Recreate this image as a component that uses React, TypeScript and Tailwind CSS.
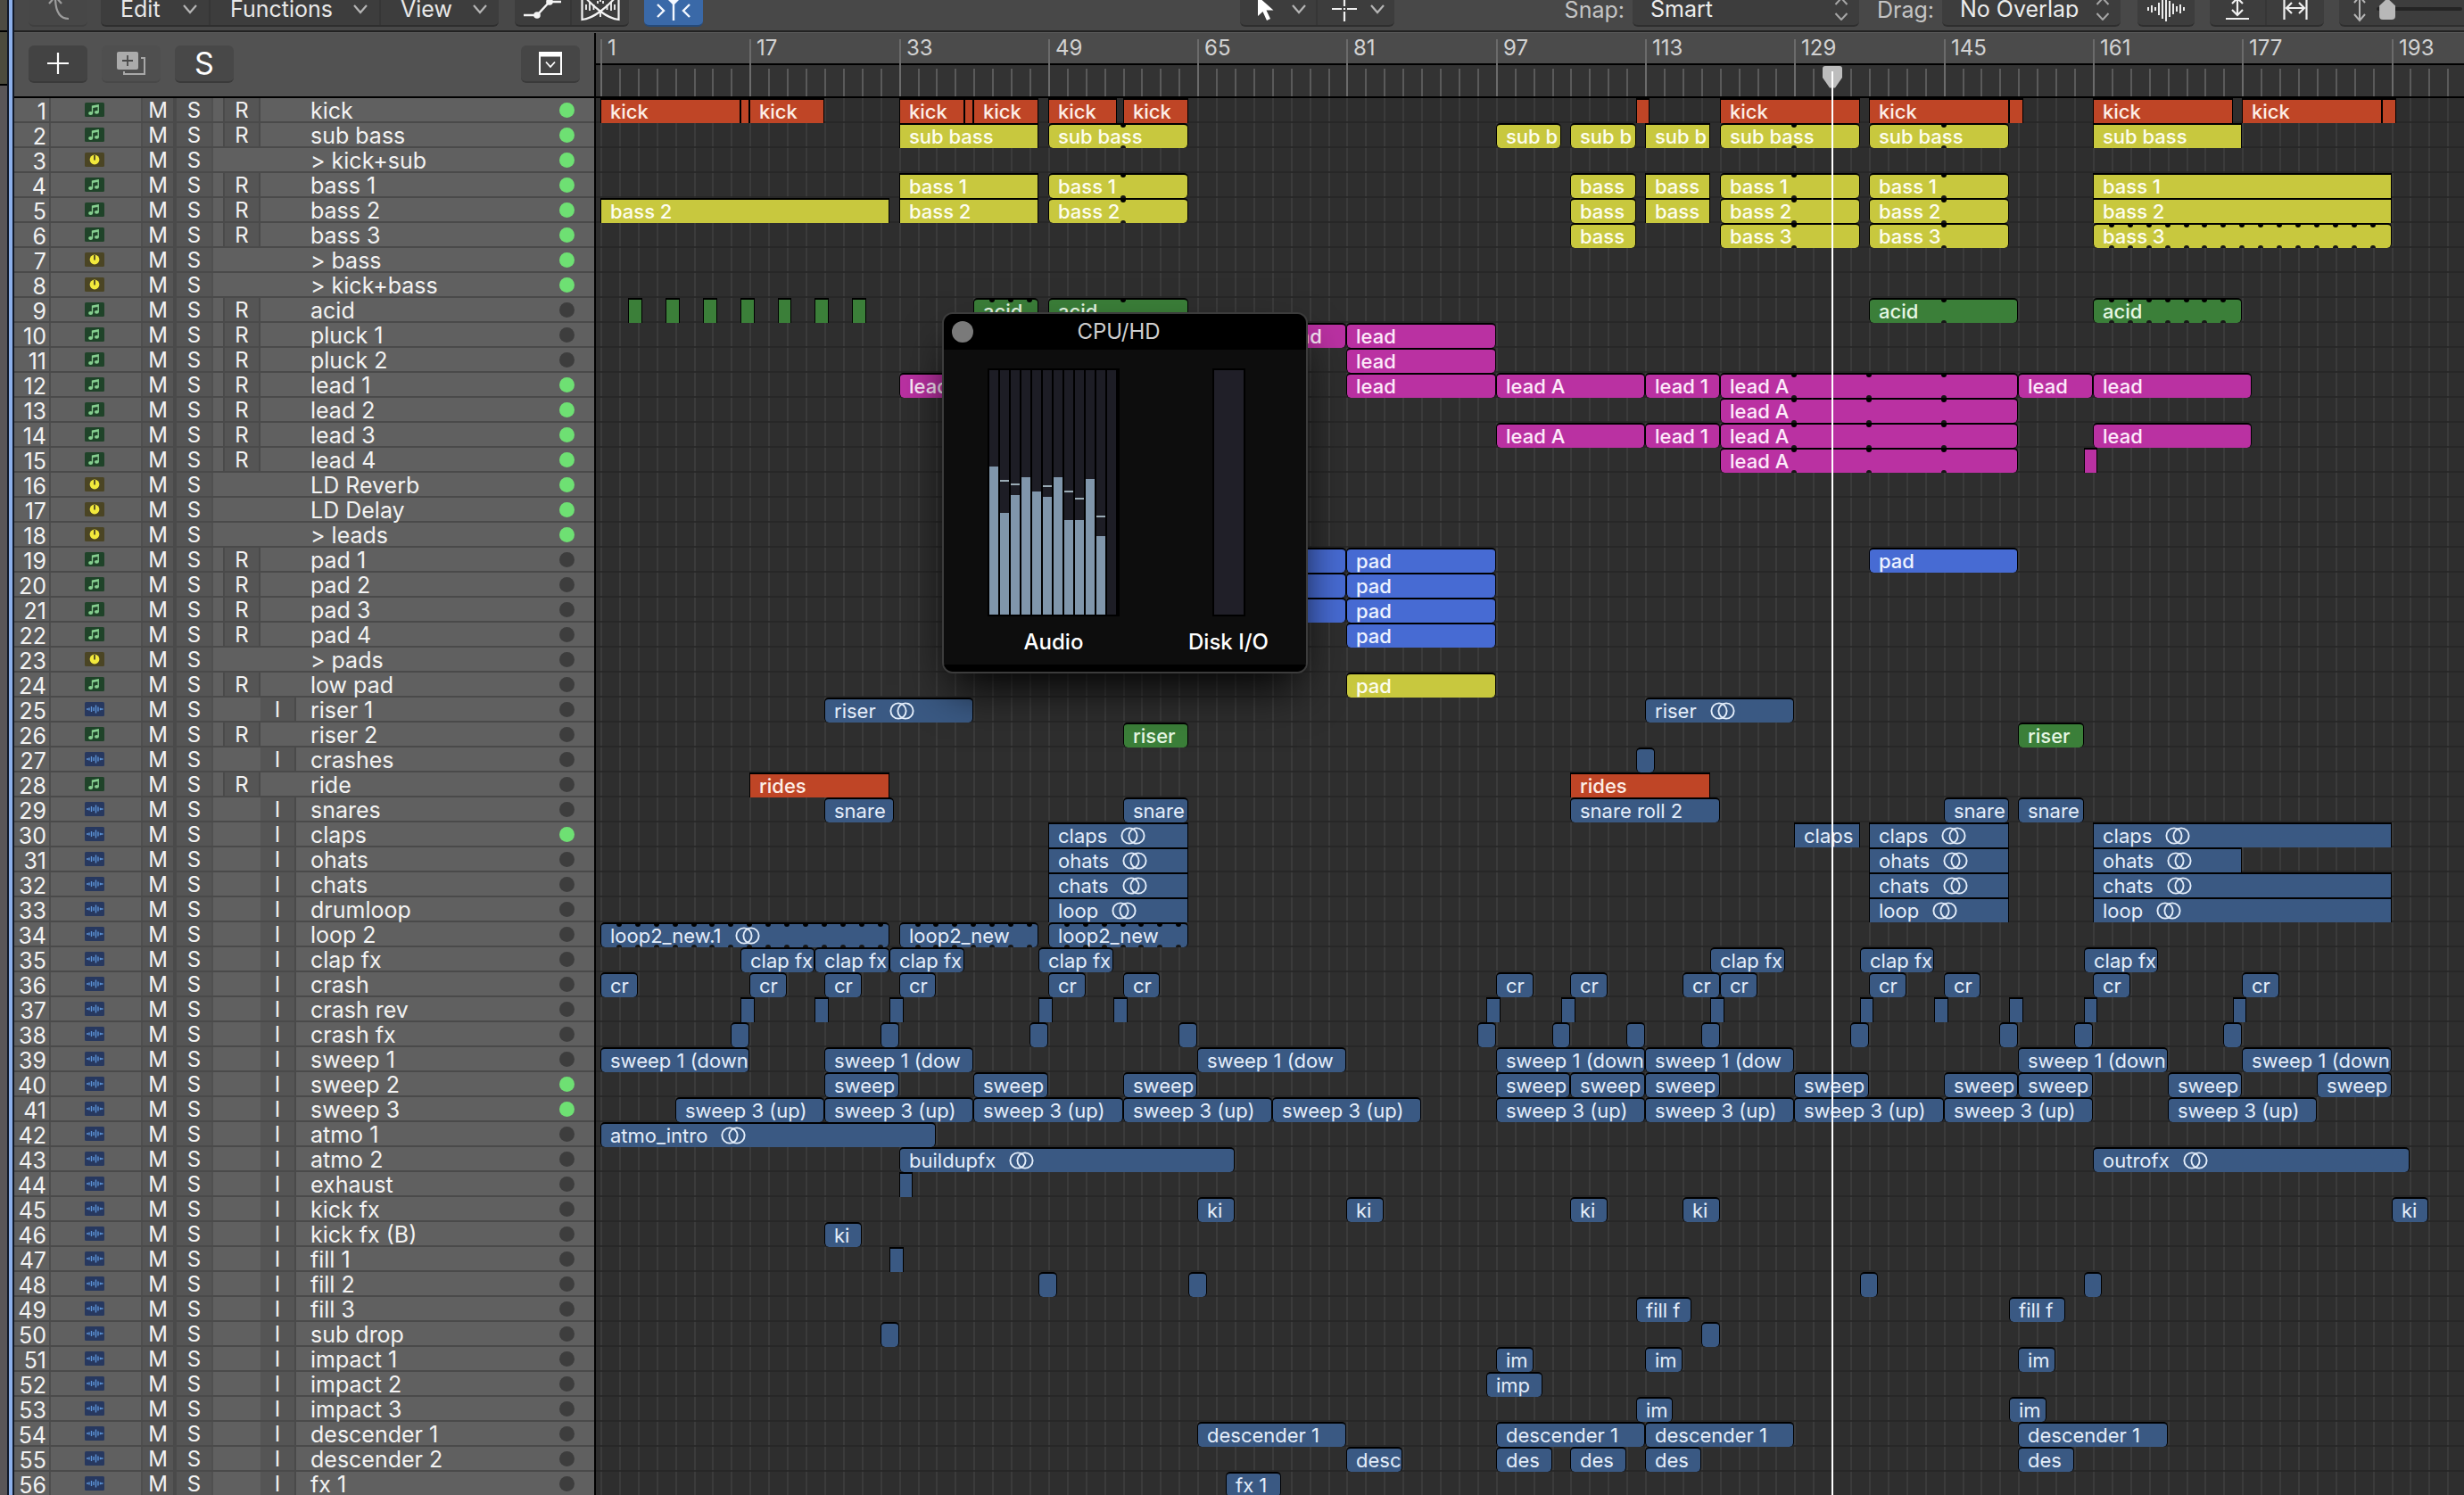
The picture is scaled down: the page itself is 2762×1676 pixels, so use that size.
import React from "react";

type Kind = "midi" | "aux" | "audio";
type Color = "orange" | "yellow" | "green" | "magenta" | "blue" | "navy";
type Region = {
  start: number;
  end: number;
  name: string;
  color: Color;
  stereo?: boolean;
  square?: boolean;
  loop?: number;
};
type Track = { name: string; kind: Kind; on: boolean; regions: Region[] };

const BAR = 10.456;
const ORIGIN = 5;
const barX = (bar: number) => Math.round(ORIGIN + (bar - 1) * BAR);

/* Region tuple: start bar, end bar, name, flags (o = stereo, q = square corners), loop length in bars */
type Spec = [number, number, string?, string?, number?];

const make = (color: Color, specs: Spec[]): Region[] =>
  specs.map(([start, end, name = "", flags = "", loop]) => ({
    start,
    end,
    name,
    color,
    stereo: flags.includes("o"),
    square: flags.includes("q"),
    loop,
  }));

const each = (color: Color, name: string, length: number, starts: number[], flags = ""): Region[] =>
  make(color, starts.map((s): Spec => [s, s + length, name, flags]));

const t = (name: string, kind: Kind, on: boolean, ...groups: Region[][]): Track => ({
  name,
  kind,
  on,
  regions: groups.flat(),
});

const tracks: Track[] = [
  t("kick", "midi", true, make("orange", [
    [1, 16, "kick", "q"], [16, 17, "", "q"], [17, 25, "kick", "q"], [33, 40, "kick", "q"], [40, 41, "", "q"],
    [41, 48, "kick", "q"], [49, 56.4, "kick", "q"], [57, 64, "kick", "q"], [112, 113.5, "", "q"],
    [121, 136, "kick", "q"], [137, 152, "kick", "q"], [152, 153.5, "", "q"], [161, 176, "kick", "q"],
    [177, 192, "kick", "q"], [192, 193.5, "", "q"],
  ])),
  t("sub bass", "midi", true, make("yellow", [
    [33, 48, "sub bass", "q"], [49, 64, "sub bass", "", 8], [97, 104, "sub b"], [105, 112, "sub b"],
    [113, 120, "sub b", "q"], [121, 136, "sub bass", "", 8], [137, 152, "sub bass", "", 8], [161, 177, "sub bass", "q"],
  ])),
  t("> kick+sub", "aux", true),
  t("bass 1", "midi", true, make("yellow", [
    [33, 48, "bass 1", "q"], [49, 64, "bass 1", "", 8], [105, 112, "bass"], [113, 120, "bass", "q"],
    [121, 136, "bass 1", "", 8], [137, 152, "bass 1", "", 8], [161, 193, "bass 1", "q"],
  ])),
  t("bass 2", "midi", true, make("yellow", [
    [1, 32, "bass 2", "q"], [33, 48, "bass 2", "q"], [49, 64, "bass 2", "", 8], [105, 112, "bass"],
    [113, 120, "bass", "q"], [121, 136, "bass 2", "", 8], [137, 152, "bass 2", "", 8], [161, 193, "bass 2", "q"],
  ])),
  t("bass 3", "midi", true, make("yellow", [
    [105, 112, "bass"], [121, 136, "bass 3", "", 8], [137, 152, "bass 3", "", 8], [161, 193, "bass 3", "", 2],
  ])),
  t("> bass", "aux", true),
  t("> kick+bass", "aux", true),
  t("acid", "midi", false, each("green", "", 1.5, [4, 8, 12, 16, 20, 24, 28], "q"), make("green", [
    [41, 48, "acid", "", 2], [49, 64, "acid", "", 8], [137, 153, "acid", "", 8], [161, 177, "acid", "", 2],
  ])),
  t("pluck 1", "midi", false, make("magenta", [[73, 81, "lead"], [81, 97, "lead"]])),
  t("pluck 2", "midi", false, make("magenta", [[81, 97, "lead"]])),
  t("lead 1", "midi", true, make("magenta", [
    [33, 49, "lead"], [81, 97, "lead"], [97, 113, "lead A"], [113, 121, "lead 1"], [121, 153, "lead A", "", 8],
    [153, 161, "lead"], [161, 178, "lead"],
  ])),
  t("lead 2", "midi", true, make("magenta", [[121, 153, "lead A", "", 8]])),
  t("lead 3", "midi", true, make("magenta", [
    [97, 113, "lead A"], [113, 121, "lead 1"], [121, 153, "lead A", "", 8], [161, 178, "lead"],
  ])),
  t("lead 4", "midi", true, make("magenta", [[121, 153, "lead A", "", 8], [160, 161.5, "", "q"]])),
  t("LD Reverb", "aux", true),
  t("LD Delay", "aux", true),
  t("> leads", "aux", true),
  t("pad 1", "midi", false, make("blue", [[65, 81, ""], [81, 97, "pad"], [137, 153, "pad"]])),
  t("pad 2", "midi", false, make("blue", [[65, 81, ""], [81, 97, "pad"]])),
  t("pad 3", "midi", false, make("blue", [[65, 81, ""], [81, 97, "pad"]])),
  t("pad 4", "midi", false, make("blue", [[81, 97, "pad"]])),
  t("> pads", "aux", false),
  t("low pad", "midi", false, make("yellow", [[81, 97, "pad"]])),
  t("riser 1", "audio", false, each("navy", "riser", 16, [25, 113], "o")),
  t("riser 2", "midi", false, each("green", "riser", 7, [57, 153])),
  t("crashes", "audio", false, each("navy", "", 2, [112])),
  t("ride", "midi", false, each("orange", "rides", 15, [17, 105], "q")),
  t("snares", "audio", false, make("navy", [
    [25, 32.5, "snare"], [57, 64, "snare"], [105, 121, "snare roll 2"], [145, 152, "snare"], [153, 160, "snare"],
  ])),
  t("claps", "audio", true, make("navy", [
    [49, 64, "claps", "oq"], [129, 136, "claps", "q"], [137, 152, "claps", "oq"], [161, 193, "claps", "oq"],
  ])),
  t("ohats", "audio", false, make("navy", [
    [49, 64, "ohats", "oq"], [137, 152, "ohats", "oq"], [161, 177, "ohats", "oq"],
  ])),
  t("chats", "audio", false, make("navy", [
    [49, 64, "chats", "oq"], [137, 152, "chats", "oq"], [161, 193, "chats", "oq"],
  ])),
  t("drumloop", "audio", false, make("navy", [
    [49, 64, "loop", "oq"], [137, 152, "loop", "oq"], [161, 193, "loop", "oq"],
  ])),
  t("loop 2", "audio", false, make("navy", [
    [1, 32, "loop2_new.1", "o", 2], [33, 48, "loop2_new", "", 2], [49, 64, "loop2_new", "", 2],
  ])),
  t("clap fx", "audio", false, each("navy", "clap fx", 8, [16, 24, 32, 48, 120, 136, 160])),
  t("crash", "audio", false, each("navy", "cr", 4, [1, 17, 25, 33, 49, 57, 97, 105, 117, 121, 137, 145, 161, 177])),
  t("crash rev", "audio", false, each("navy", "", 1.5, [16, 24, 32, 48, 56, 96, 104, 120, 136, 144, 152, 160, 176], "q")),
  t("crash fx", "audio", false, each("navy", "", 2, [15, 31, 47, 63, 95, 103, 111, 119, 135, 151, 159, 175])),
  t("sweep 1", "audio", false, make("navy", [
    [1, 17, "sweep 1 (down"], [25, 41, "sweep 1 (dow"], [65, 81, "sweep 1 (dow"], [97, 113, "sweep 1 (down"],
    [113, 129, "sweep 1 (dow"], [153, 169, "sweep 1 (down"], [177, 193, "sweep 1 (down"],
  ])),
  t("sweep 2", "audio", true, each("navy", "sweep", 8, [25, 41, 57, 97, 105, 113, 129, 145, 153, 169, 185])),
  t("sweep 3", "audio", true, each("navy", "sweep 3 (up)", 16, [9, 25, 41, 57, 73, 97, 113, 129, 145, 169])),
  t("atmo 1", "audio", false, each("navy", "atmo_intro", 36, [1], "o")),
  t("atmo 2", "audio", false, make("navy", [[33, 69, "buildupfx", "o"], [161, 195, "outrofx", "o"]])),
  t("exhaust", "audio", false, each("navy", "", 1.5, [33], "q")),
  t("kick fx", "audio", false, each("navy", "ki", 4, [65, 81, 105, 117, 193])),
  t("kick fx (B)", "audio", false, each("navy", "ki", 4, [25])),
  t("fill 1", "audio", false, each("navy", "", 1.5, [32], "q")),
  t("fill 2", "audio", false, each("navy", "", 2, [48, 64, 136, 160])),
  t("fill 3", "audio", false, each("navy", "fill f", 6, [112, 152])),
  t("sub drop", "audio", false, each("navy", "", 2, [31, 119])),
  t("impact 1", "audio", false, each("navy", "im", 4, [97, 113, 153])),
  t("impact 2", "audio", false, each("navy", "imp", 6, [96])),
  t("impact 3", "audio", false, each("navy", "im", 4, [112, 152])),
  t("descender 1", "audio", false, each("navy", "descender 1", 16, [65, 97, 113, 153])),
  t("descender 2", "audio", false, each("navy", "desc", 6, [81]), each("navy", "des", 6, [97, 105, 113, 153])),
  t("fx 1", "audio", false, each("navy", "fx 1", 6, [68])),
];

const fill: Record<Color, string> = {
  orange: "bg-[#bf4526] text-[#fdeee6] font-medium",
  yellow: "bg-[#c8c83e] text-[#fdfdee] font-medium",
  green: "bg-[#3b7f39] text-[#e6f7e4] font-medium",
  magenta: "bg-[#ba31a2] text-[#fdeafa] font-medium",
  blue: "bg-[#476bd3] text-[#eef3ff] font-medium",
  navy: "bg-[#3a5983] text-[#e3edfa]",
};

function StereoIcon() {
  return (
    <svg viewBox="0 0 28 20" className="ml-[15px] h-5 w-7 shrink-0" fill="none" stroke="currentColor" strokeWidth="1.9">
      <circle cx="10" cy="10" r="8.6" />
      <circle cx="18" cy="10" r="8.6" />
    </svg>
  );
}

function RegionBox({ region }: { region: Region }) {
  const left = barX(region.start);
  const width = barX(region.end) - left;
  const notches: number[] = [];
  if (region.loop) {
    for (let b = region.start + region.loop; b < region.end; b += region.loop) notches.push(barX(b) - left);
  }
  return (
    <div
      className={`absolute top-0 flex h-7 items-center border-x border-t-2 border-black ${region.square ? "" : "rounded-[5px]"} ${fill[region.color]}`}
      style={{ left, width }}
    >
      {region.name && (
        <span className="flex items-center pl-[10px] text-[22px] leading-[26px] whitespace-nowrap">
          {region.name}
          {region.stereo && <StereoIcon />}
        </span>
      )}
      {notches.map((n) => (
        <React.Fragment key={n}>
          <span className="absolute top-0 h-[3px] w-[6px] rounded-b-full bg-black" style={{ left: n - 4 }} />
          <span className="absolute bottom-0 h-[3px] w-[6px] rounded-t-full bg-[#161616]" style={{ left: n - 4 }} />
        </React.Fragment>
      ))}
    </div>
  );
}

function KindIcon({ kind }: { kind: Kind }) {
  if (kind === "midi")
    return (
      <svg viewBox="0 0 22 16" className="h-4 w-[22px]">
        <rect width="22" height="16" rx="1.5" fill="#1f4329" />
        <g fill="#86cf90">
          <ellipse cx="6.6" cy="12" rx="2.5" ry="1.9" />
          <ellipse cx="13.4" cy="10.8" rx="2.5" ry="1.9" />
          <path d="M7.8 12V3.4L15.9 2v8.8h-1.4V5L9.2 5.9V12z" />
        </g>
      </svg>
    );
  if (kind === "aux")
    return (
      <svg viewBox="0 0 22 16" className="h-4 w-[22px]">
        <rect width="22" height="16" rx="1.5" fill="#4b4524" />
        <circle cx="11" cy="8" r="5.4" fill="#f2e93c" />
        <path d="M11 3v5.4" stroke="#4b4524" strokeWidth="1.8" />
      </svg>
    );
  return (
    <svg viewBox="0 0 22 16" className="h-4 w-[22px]">
      <rect width="22" height="16" rx="1.5" fill="#27385f" />
      <path d="M2 8h2M5 6.5v3M7.5 5v6M10 6v4M12.5 3.5v9M15 5.5v5M17.5 6.7v2.6M18 8h2.5" stroke="#5c93d6" strokeWidth="1.4" />
    </svg>
  );
}

const cell = "flex h-[26px] cursor-default items-center justify-center bg-[#555] pt-[2px] text-2xl leading-6 text-[#f2f2f2]";

function TrackHeader({ track, index }: { track: Track; index: number }) {
  return (
    <li className="grid h-7 grid-cols-[41px_101px_40px_41px_11px_42px_40px_1fr_39px] items-center border-b-2 border-[#4a4a4a] bg-[#606060]">
      <span className="flex h-[26px] items-start justify-end border-r-2 border-[#4e4e4e] pt-[2px] pr-[3px] text-[25px] leading-[27px] text-[#f2f2f2]">
        {index + 1}
      </span>
      <span className="flex justify-center pr-1">
        <KindIcon kind={track.kind} />
      </span>
      <button className={`${cell} border-r-4 border-l-2 border-r-[#4a4a4a] border-l-[#4e4e4e]`} aria-label={`Mute ${track.name}`}>M</button>
      <button className={`${cell} border-r-2 border-[#505050]`} aria-label={`Solo ${track.name}`}>S</button>
      <span />
      {track.kind === "midi" ? (
        <button className={`${cell} border-x-2 border-[#4a4a4a]`} aria-label={`Record ${track.name}`}>R</button>
      ) : (
        <span />
      )}
      {track.kind === "audio" ? (
        <button className={`${cell} border-r-2 border-[#4a4a4a]`} aria-label={`Input monitor ${track.name}`}>I</button>
      ) : (
        <span />
      )}
      <span className="pt-[2px] pl-4 text-[25px] leading-6 whitespace-nowrap text-[#f2f2f2]">{track.name}</span>
      <span className={`size-[17px] rounded-full ${track.on ? "bg-[#6ee073]" : "bg-[#3d3d3d]"}`} />
    </li>
  );
}

const Chevron = () => (
  <svg viewBox="0 0 18 12" className="h-3 w-[18px]" fill="none" stroke="#b4b4b4" strokeWidth="2.2">
    <path d="M2 2l7 8 7-8" />
  </svg>
);

const UpDown = () => (
  <svg viewBox="0 0 16 26" className="pointer-events-none h-[26px] w-4" fill="none" stroke="#a6a6a6" strokeWidth="2">
    <path d="M1.5 8L8 1l6.5 7M1.5 18L8 25l6.5-7" />
  </svg>
);

const group = "flex h-[38px] rounded-b-md border-b-2 border-[#2e2e2e] bg-[#3d3d3d]";

function MenuButton({ label, width, last }: { label: string; width: string; last?: boolean }) {
  return (
    <button className={`flex items-center justify-between pr-3 pl-[22px] text-[25px] leading-5 text-[#e8e8e8] ${width} ${last ? "" : "border-r-2 border-[#363636]"}`}>
      {label}
      <Chevron />
    </button>
  );
}

function Picker({ label, value, width }: { label: string; value: string; width: string }) {
  return (
    <label className="flex h-[38px] items-center gap-[9px] text-[25px] leading-5 text-[#c4c4c4]">
      {label}
      <span className={`${group} relative items-center ${width}`}>
        <select className="w-full appearance-none bg-transparent pl-[20px] text-[25px] leading-5 text-[#ececec] outline-none">
          <option>{value}</option>
        </select>
        <span className="pointer-events-none absolute right-3">
          <UpDown />
        </span>
      </span>
    </label>
  );
}

function Toolbar() {
  return (
    <header className="flex h-9 shrink-0 items-end overflow-hidden border-b-2 border-[#222] bg-[#484848] pb-1 pl-4">
      <button aria-label="Back" className="flex h-[38px] w-[66px] items-center justify-center rounded-b-md border-b-2 border-[#3f3f3f] bg-[#474747]">
        <svg viewBox="0 0 26 30" className="h-[30px] w-[26px]" fill="none" stroke="#9d9d9d" strokeWidth="2.2">
          <path d="M25 26C15 26 10 19 10 2M3 9l7-8 7 8" />
        </svg>
      </button>
      <div className={`${group} ml-[15px]`}>
        <MenuButton label="Edit" width="w-[123px]" />
        <MenuButton label="Functions" width="w-[191px]" />
        <MenuButton label="View" width="w-[132px]" last />
      </div>
      <div className={`${group} ml-[18px]`}>
        <button aria-label="Automation" className="flex w-16 items-center justify-center border-r-2 border-[#363636]">
          <svg viewBox="0 0 44 34" className="h-[34px] w-11" fill="none" stroke="#f4f4f4" strokeWidth="2.4">
            <path d="M1 24h15L30 9h13" />
            <circle cx="16" cy="24" r="3.8" fill="#f4f4f4" stroke="none" />
            <circle cx="30" cy="9" r="3.8" fill="#f4f4f4" stroke="none" />
          </svg>
        </button>
        <button aria-label="Flex" className="flex w-16 items-center justify-center">
          <svg viewBox="0 0 44 36" className="h-9 w-11" fill="none" stroke="#f4f4f4" strokeWidth="2.2">
            <path d="M1.5 1v29C14 29 30 16 42.500 1v29C30 29 14 16 1.500 1" />
            <path d="M6 13v6M10 10v10M14.500 13v6M19 9v3M22 6v4M25 9v3M29.500 13v6M34 10v10M38 13v6M22 21v6" strokeWidth="1.8" />
          </svg>
        </button>
      </div>
      <button aria-label="Catch playhead" className="ml-[17px] flex h-[38px] w-[66px] items-center justify-center rounded-b-md border-b-2 border-[#254a7a] bg-[#3a69a8]">
        <svg viewBox="0 0 40 34" className="h-[34px] w-10" fill="none" stroke="#f4f8ff" strokeWidth="2.4">
          <path d="M2 12l7 7-7 7M38 12l-7 7 7 7M20 8v22" />
          <path d="M13 2h14v4l-7 7-7-7z" fill="#f4f8ff" stroke="none" />
        </svg>
      </button>
      <div className="grow-[76]" />
      <div className={group}>
        <button aria-label="Pointer tool" className="flex w-[87px] items-center justify-between border-r-2 border-[#363636] pr-[10px] pl-[19px]">
          <svg viewBox="0 0 20 28" className="h-7 w-5" fill="#fff">
            <path d="M1 0v22l5.500-5 4.500 10 4-2-4.500-9.500h8z" />
          </svg>
          <Chevron />
        </button>
        <button aria-label="Marquee tool" className="flex w-[86px] items-center justify-between pr-[10px] pl-[16px]">
          <svg viewBox="0 0 28 28" className="size-7" stroke="#f0f0f0" strokeWidth="2.2">
            <path d="M0 14h11M17 14h11M14 0v11M14 17v11M14 13v2" />
          </svg>
          <Chevron />
        </button>
      </div>
      <div className="grow-[24]" />
      <Picker label="Snap:" value="Smart" width="w-[254px]" />
      <div className="w-5 shrink-0" />
      <Picker label="Drag:" value="No Overlap" width="w-[200px]" />
      <button aria-label="Waveform zoom" className={`${group} ml-[19px] w-16 items-center justify-center`}>
        <svg viewBox="0 0 42 30" className="h-[30px] w-[42px]" stroke="#ececec" strokeWidth="2">
          <path d="M1 13v4M5 11v8M9 13v4M13 8v14M17 4v22M21 1v28M25 6v18M29 9v12M33 12v6M37 10v10M41 13v4" />
        </svg>
      </button>
      <div className={`${group} ml-[17px]`}>
        <button aria-label="Vertical auto zoom" className="flex w-16 items-center justify-center border-r-2 border-[#363636]">
          <svg viewBox="0 0 26 32" className="h-8 w-[26px]" fill="none" stroke="#f0f0f0" strokeWidth="2.2">
            <path d="M0 27h26M13 5v17M7 10l6-6 6 6M7 17l6 6 6-6" />
          </svg>
        </button>
        <button aria-label="Horizontal auto zoom" className="flex w-16 items-center justify-center">
          <svg viewBox="0 0 28 28" className="size-7" fill="none" stroke="#f0f0f0" strokeWidth="2.2">
            <path d="M1.500 0v26M26.500 0v26M5 13h18M10 7l-6 6 6 6M18 7l6 6-6 6" />
          </svg>
        </button>
      </div>
      <label className="ml-[17px] flex h-[38px] w-[140px] items-center gap-3 rounded-bl-md border-b-2 border-[#2e2e2e] bg-[#3d3d3d] pl-[16px]">
        <svg viewBox="0 0 14 30" className="h-[30px] w-[14px] shrink-0" fill="none" stroke="#b4b4b4" strokeWidth="2">
          <path d="M7 2v25M1 8l6-7 6 7M1 21l6 7 6-7" />
        </svg>
        <input
          type="range"
          aria-label="Vertical zoom"
          defaultValue={4}
          className="h-1 w-[96px] shrink-0 appearance-none rounded bg-[#242424] [&::-webkit-slider-thumb]:h-[24px] [&::-webkit-slider-thumb]:w-[18px] [&::-webkit-slider-thumb]:appearance-none [&::-webkit-slider-thumb]:rounded-sm [&::-webkit-slider-thumb]:bg-[#b8b8b8] [&::-webkit-slider-thumb]:[clip-path:polygon(50%_0,100%_35%,100%_100%,0_100%,0_35%)]"
        />
      </label>
    </header>
  );
}

const headBtn = "flex h-[42px] w-[66px] items-center justify-center rounded-md border-b-2 border-[#3a3a3a]";

function TrackHeaderTools() {
  return (
    <div className="flex h-[73px] shrink-0 items-start border-b-2 border-black bg-[#525252] px-4 pt-[14px]">
      <button aria-label="Add track" className={`${headBtn} bg-[#434343]`}>
        <svg viewBox="0 0 24 26" className="h-[26px] w-6" stroke="#fff" strokeWidth="2.2">
          <path d="M12 1v24M0 13h24" />
        </svg>
      </button>
      <button aria-label="Duplicate track" className="ml-4 flex h-[42px] w-[66px] items-center justify-center rounded-md border-b-2 border-[#484848] bg-[#4f4f4f]">
        <svg viewBox="0 0 34 28" className="h-7 w-[34px]" fill="none">
          <path d="M28 8h4v18H9v-3" stroke="#a8a8a8" strokeWidth="2" />
          <rect x="1" y="1" width="24" height="20" rx="2" fill="#ababab" />
          <path d="M13 5v12M7 11h12" stroke="#4a4a4a" strokeWidth="1.8" />
        </svg>
      </button>
      <button aria-label="Global solo" className={`${headBtn} ml-4 bg-[#484848] text-[34px] leading-none text-white`}>
        S
      </button>
      <button aria-label="Track header settings" className={`${headBtn} ml-auto bg-[#464646]`}>
        <svg viewBox="0 0 28 28" className="size-7" fill="none" stroke="#fff" strokeWidth="2">
          <rect x="2" y="2" width="24" height="24" />
          <path d="M2 4h24" strokeWidth="5" />
          <path d="M9 12.500l5 5.500 5-5.500" strokeWidth="1.8" />
        </svg>
      </button>
    </div>
  );
}

const ticks = Array.from({ length: 100 }, (_, i) => 1 + i * 2);

function Ruler() {
  return (
    <div className="relative h-[73px] shrink-0 border-b-2 border-black bg-[#333]">
      <div className="h-9 border-b-2 border-black bg-[#4b4b4b]" />
      {ticks.map((b) =>
        (b - 1) % 16 === 0 ? (
          <div
            key={b}
            className="absolute top-[7px] bottom-0 border-l-2 border-[#6b6b6b] pl-[6px] text-2xl leading-5 text-[#d2d2d2]"
            style={{ left: barX(b) }}
          >
            {b}
          </div>
        ) : (
          <div key={b} className="absolute top-10 bottom-0 w-[2px] bg-[#5a5a5a]" style={{ left: barX(b) }} />
        ),
      )}
    </div>
  );
}

const cores: [number, number?][] = [
  [166], [114, 151], [134, 147], [154], [138], [132, 145], [154], [106, 139], [106, 131], [152], [88, 111], [0],
];

function CpuWindow() {
  return (
    <section className="absolute top-[350px] left-[1056px] w-[410px] overflow-hidden rounded-xl border-2 border-[#3c3c3c] bg-[#0d0d0d] shadow-2xl shadow-black">
      <div className="relative flex h-10 items-center justify-center bg-black">
        <button aria-label="Close" className="absolute left-[9px] size-6 rounded-full bg-[#7a7a7a]" />
        <h2 className="pr-[14px] text-2xl text-[#cfcfcf]">CPU/HD</h2>
      </div>
      <div className="flex gap-[72px] border-b-[8px] border-black pt-[21px] pb-[10px] pl-[49px] text-2xl leading-[30px] font-medium text-white">
        <div className="flex w-[148px] flex-col items-center gap-[14px]">
          <div className="flex h-[278px] w-[148px] gap-[2px] border-2 border-black bg-black">
            {cores.map(([level, peak], i) => (
              <div key={i} className="relative flex w-[10px] items-end bg-[#1d1d25]">
                <div className="w-full bg-[#8096ab]" style={{ height: level }} />
                {peak && <div className="absolute left-0 h-[2px] w-full bg-[#9aabb5]" style={{ bottom: peak - 2 }} />}
              </div>
            ))}
          </div>
          Audio
        </div>
        <div className="flex w-[100px] flex-col items-center gap-[14px]">
          <div className="h-[278px] w-[37px] border-2 border-black bg-[#201f28]" />
          Disk I/O
        </div>
      </div>
    </section>
  );
}

export default function App() {
  const playhead = barX(133.1);
  return (
    <div className="relative flex h-screen overflow-hidden bg-[#2e2e2e] font-['Inter','Liberation_Sans',sans-serif] text-white">
      <div className="flex w-2 shrink-0 flex-col bg-[#5a5658]">
        <div className="h-9 border-b-2 border-black bg-[#4d4b42]" />
        <div className="h-[60px] border-b-2 border-black bg-[#4c4b3d]" />
      </div>
      <div className="w-2 shrink-0 border-x-2 border-[#101828] bg-[#8db0ea]" />
      <main className="flex min-w-0 flex-1 flex-col">
        <Toolbar />
        <div className="flex min-h-0 flex-1 border-t border-[#5a5a5a]">
          <aside className="flex w-[652px] shrink-0 flex-col border-r-2 border-black bg-[#606060]">
            <TrackHeaderTools />
            <ol>
              {tracks.map((track, i) => (
                <TrackHeader key={track.name} track={track} index={i} />
              ))}
            </ol>
          </aside>
          <div className="relative flex min-w-0 flex-1 flex-col">
            <Ruler />
            <div className="relative min-h-0 flex-1">
              {ticks.map((b) => (
                <div key={b} className="absolute inset-y-0 w-[2px] bg-[#3b3b3b]" style={{ left: barX(b) }} />
              ))}
              {tracks.map((track) => (
                <div key={track.name} className="relative h-7 border-b-2 border-[#262626]/80">
                  {track.regions.map((region) => (
                    <RegionBox key={region.start} region={region} />
                  ))}
                </div>
              ))}
            </div>
            <div className="absolute top-[37px] bottom-0 flex w-6 flex-col items-center" style={{ left: playhead - 12 }}>
              <svg viewBox="0 0 24 25" className="h-[25px] w-6 shrink-0">
                <path d="M1 3q0-3 3-3h16q3 0 3 3v10l-8 11.500h-6L1 13z" fill="#bdbdbd" />
                <path d="M12 6v19" stroke="#fff" strokeWidth="2" />
              </svg>
              <div className="w-[2px] flex-1 bg-white" />
            </div>
          </div>
        </div>
      </main>
      <CpuWindow />
    </div>
  );
}
